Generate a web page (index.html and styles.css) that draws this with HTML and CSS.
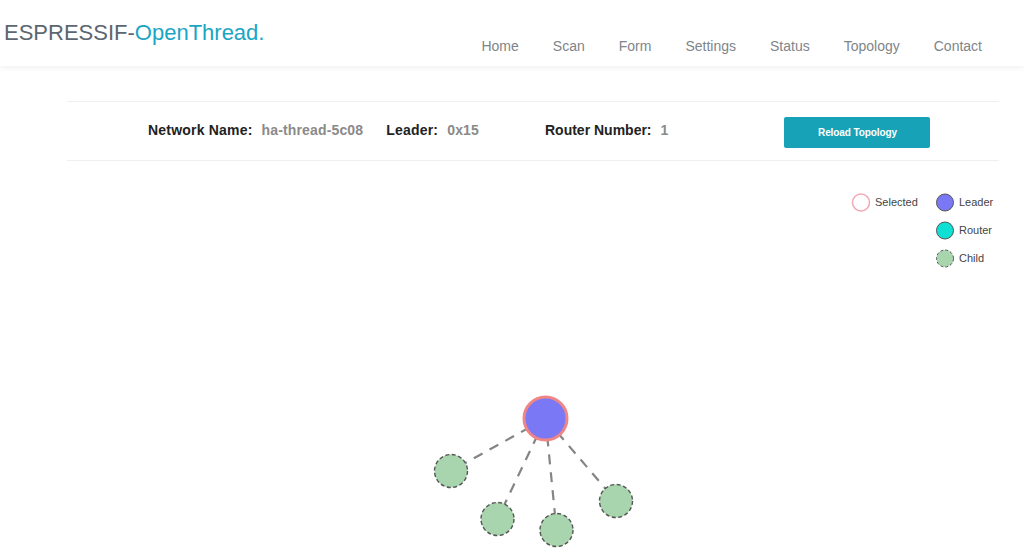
FILE: index.html
```html
<!DOCTYPE html>
<html lang="en">
<head>
<meta charset="utf-8">
<title>ESPRESSIF-OpenThread</title>
<link rel="stylesheet" href="styles.css">
</head>
<body>
<header class="site-header">
  <div class="logo"><span class="logo-main">ESPRESSIF-</span><span class="logo-accent">OpenThread.</span></div>
  <nav class="nav">
    <a href="#" class="nav-link">Home</a>
    <a href="#" class="nav-link">Scan</a>
    <a href="#" class="nav-link">Form</a>
    <a href="#" class="nav-link">Settings</a>
    <a href="#" class="nav-link">Status</a>
    <a href="#" class="nav-link">Topology</a>
    <a href="#" class="nav-link">Contact</a>
  </nav>
</header>
<main class="content">
  <section class="info-bar">
    <div class="info-item info-network"><span class="label">Network Name:</span><span class="value">ha-thread-5c08</span></div>
    <div class="info-item info-leader"><span class="label">Leader:</span><span class="value">0x15</span></div>
    <div class="info-item info-router"><span class="label">Router Number:</span><span class="value">1</span></div>
    <button class="reload-btn" type="button">Reload Topology</button>
  </section>
</main>
<svg class="topology" width="1024" height="393" viewBox="0 162 1024 393" xmlns="http://www.w3.org/2000/svg">
  <g class="links">
    <line x1="545.5" y1="419.5" x2="451" y2="472"/>
    <line x1="545.5" y1="419.5" x2="497.5" y2="520"/>
    <line x1="545.5" y1="419.5" x2="556.5" y2="531"/>
    <line x1="545.5" y1="419.5" x2="616" y2="502"/>
  </g>
  <g class="nodes">
    <circle class="node-child" cx="451" cy="472" r="16.5"/>
    <circle class="node-child" cx="497.5" cy="520" r="16.5"/>
    <circle class="node-child" cx="556.5" cy="531" r="16.5"/>
    <circle class="node-child" cx="616" cy="502" r="16.5"/>
    <circle class="node-leader selected" cx="545.5" cy="419.5" r="21.5"/>
  </g>
  <g class="legend">
    <circle class="legend-selected" cx="861" cy="203.5" r="8.5"/>
    <text x="875" y="207">Selected</text>
    <circle class="legend-leader" cx="945" cy="203.5" r="8.5"/>
    <text x="959" y="207">Leader</text>
    <circle class="legend-router" cx="945" cy="231.5" r="8.5"/>
    <text x="959" y="235">Router</text>
    <circle class="legend-child" cx="945" cy="259.5" r="8.5"/>
    <text x="959" y="263">Child</text>
  </g>
</svg>
</body>
</html>
```
FILE: styles.css
```css
html, body {
  margin: 0;
  padding: 0;
  background: #ffffff;
  font-family: "Liberation Sans", Arial, sans-serif;
}

.site-header {
  position: relative;
  height: 66px;
  background: #ffffff;
  box-shadow: 0 2px 6px rgba(0, 0, 0, 0.06);
  display: flex;
  justify-content: space-between;
}

.logo {
  padding: 20px 0 0 4px;
  font-size: 22px;
  line-height: 26px;
}

.logo-main {
  color: #5c6670;
}

.logo-accent {
  color: #1aa5c5;
}

.nav {
  display: flex;
  align-items: flex-end;
  padding: 0 42px 11px 0;
}

.nav-link {
  color: #808589;
  text-decoration: none;
  font-size: 14px;
  line-height: 18px;
  margin-left: 34px;
}

.content {
  padding: 35px 25px 0 67px;
}

.info-bar {
  height: 58px;
  border-top: 1px solid #eef0f0;
  border-bottom: 1px solid #eef0f0;
  display: flex;
  align-items: center;
  padding-left: 81px;
  font-size: 14px;
  font-weight: bold;
}

.info-item {
  display: flex;
  gap: 9px;
  margin-top: -2px;
}

.label {
  color: #222222;
  letter-spacing: 0.2px;
}

.value {
  color: #8a8a8a;
  letter-spacing: 0.15px;
}

.info-network {
  margin-right: 23px;
}

.info-leader {
  margin-right: 66px;
}

.info-router {
  margin-right: 116px;
}

.info-router .label {
  letter-spacing: 0;
}

.reload-btn {
  width: 146px;
  height: 31px;
  border: none;
  border-radius: 2px;
  background: #17a2b8;
  color: #ffffff;
  font-family: "Liberation Sans", Arial, sans-serif;
  font-size: 10px;
  font-weight: bold;
  letter-spacing: -0.1px;
  margin-top: 2px;
}

.topology {
  display: block;
}

.links line {
  stroke: #858585;
  stroke-width: 2.2;
  stroke-dasharray: 10 8;
}

.node-child {
  fill: #a8d5ad;
  stroke: #555555;
  stroke-width: 1.4;
  stroke-dasharray: 4 2.5;
}

.node-leader {
  fill: #7b78f5;
  stroke: #f08585;
  stroke-width: 3;
}

.legend text {
  font-family: "Liberation Sans", Arial, sans-serif;
  font-size: 11px;
  fill: #444444;
}

.legend-selected {
  fill: #ffffff;
  stroke: #f2a8b4;
  stroke-width: 1.5;
}

.legend-leader {
  fill: #7b78f5;
  stroke: #555555;
  stroke-width: 1;
}

.legend-router {
  fill: #10dfd3;
  stroke: #555555;
  stroke-width: 1;
}

.legend-child {
  fill: #a8d5ad;
  stroke: #555555;
  stroke-width: 1;
  stroke-dasharray: 3 2;
}
```
